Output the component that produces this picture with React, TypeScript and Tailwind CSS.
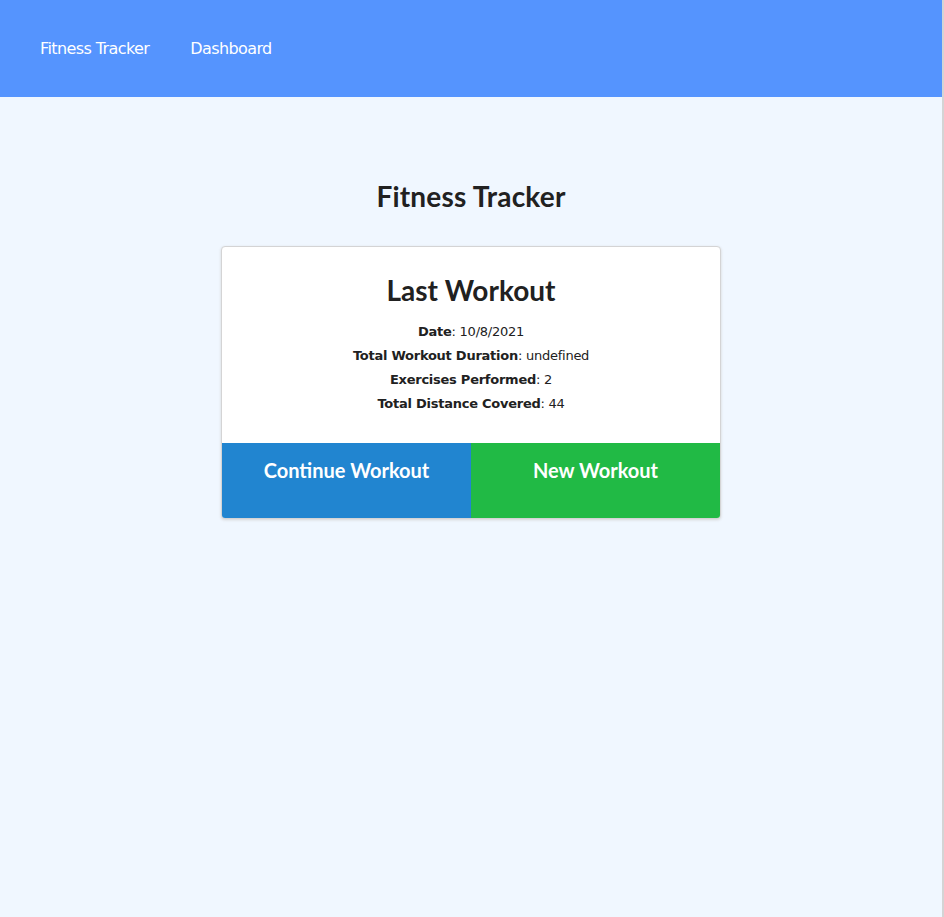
const stats = [
  { label: 'Date', value: '10/8/2021' },
  { label: 'Total Workout Duration', value: 'undefined' },
  { label: 'Exercises Performed', value: '2' },
  { label: 'Total Distance Covered', value: '44' },
];

const App = () => {
  return (
    <div className="min-h-[917px] bg-[#f0f7ff] border-r-2 border-[#d4d4d5] text-[#212121]">
      {/* Nav */}
      <nav className="h-[97px] bg-[#5594fe] flex items-center px-10 gap-[41px] font-['DejaVu_Sans',sans-serif] text-[16px] text-white tracking-[-0.6px]">
        <a href="#">Fitness Tracker</a>
        <a href="#">Dashboard</a>
      </nav>

      <main className="flex flex-col items-center pt-[80px]">
        <h1 className="font-['Lato',sans-serif] font-bold text-[28px] leading-[38px] tracking-[0.2px]">Fitness Tracker</h1>

        <div className="mt-[31px] w-[500px] bg-white rounded-[4px] border border-[#d4d4d5] shadow-[0_1px_3px_0_#d4d4d5] overflow-hidden">
          <div className="pt-[24px] pb-[27px] text-center">
            <h2 className="font-['Lato',sans-serif] font-bold text-[28px] leading-[38px]">Last Workout</h2>
            <ul className="mt-[11px] font-['DejaVu_Sans',sans-serif] text-[13px] leading-[24px] tracking-[-0.25px]">
              {stats.map((s) => (
                <li key={s.label}>
                  <strong>{s.label}</strong>: {s.value}
                </li>
              ))}
            </ul>
          </div>

          <div className="grid grid-cols-2 h-[75px] font-['Lato',sans-serif] font-bold text-[20px] text-white">
            <button className="bg-[#2185d0] pt-[12px] flex justify-center items-start">Continue Workout</button>
            <button className="bg-[#21ba45] pt-[12px] flex justify-center items-start">New Workout</button>
          </div>
        </div>
      </main>
    </div>
  );
};

export default App;
